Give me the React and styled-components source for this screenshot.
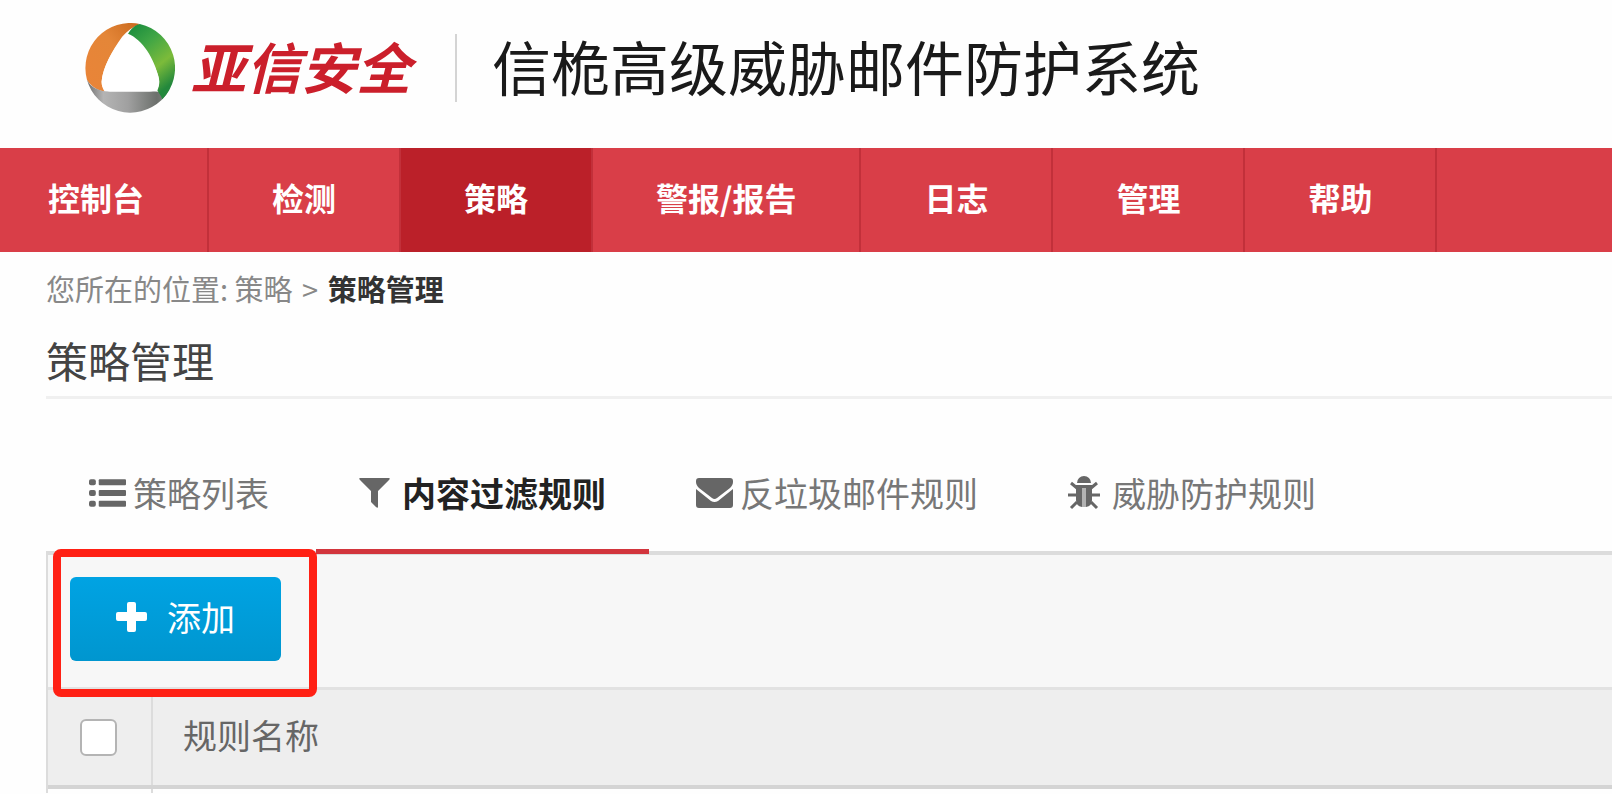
import React, { useState } from 'react';
import styled, { createGlobalStyle } from 'styled-components';

const NAV_ITEMS = ['控制台', '检测', '策略', '警报/报告', '日志', '管理', '帮助'];

const TABS = [
    { id: 'list', label: '策略列表', Icon: ListIcon, gap: 7 },
    { id: 'content', label: '内容过滤规则', Icon: FilterIcon, gap: 12 },
    { id: 'spam', label: '反垃圾邮件规则', Icon: MailIcon, gap: 7 },
    { id: 'threat', label: '威胁防护规则', Icon: BugIcon, gap: 12 },
];

function Logo() {
    return (
        <svg width="90" height="90" viewBox="0 0 92 92" aria-hidden="true">
            <defs>
                <linearGradient id="orange" x1="0" y1="1" x2="1" y2="0">
                    <stop offset="0" stopColor="#ea8438" />
                    <stop offset="0.6" stopColor="#e48638" />
                    <stop offset="1" stopColor="#c9681c" />
                </linearGradient>
                <linearGradient id="green" x1="0" y1="0" x2="0.5" y2="1">
                    <stop offset="0" stopColor="#14883c" />
                    <stop offset="0.35" stopColor="#3fa545" />
                    <stop offset="0.7" stopColor="#7cbb3a" />
                    <stop offset="1" stopColor="#23883c" />
                </linearGradient>
                <linearGradient id="grey" x1="0" y1="0" x2="1" y2="0">
                    <stop offset="0" stopColor="#6f6f6f" />
                    <stop offset="0.2" stopColor="#b4b4b4" />
                    <stop offset="0.5" stopColor="#a0a0a0" />
                    <stop offset="0.85" stopColor="#6c706c" />
                    <stop offset="1" stopColor="#7d857d" />
                </linearGradient>
            </defs>
            <path d="M2 58A46 46 0 0 1 56 1C49 4 43 8 38 14C28 28 18 45 17 60C17 64 18 67 20 70C13 69 6 65 2 58Z" fill="url(#orange)" />
            <path d="M2 58A46 46 0 0 0 78 79C81 76 84 72 86 68C80 71 74 70 68 70H24C15 70 6 66 2 58Z" fill="url(#grey)" />
            <path d="M44 11C47 6 51 2 56 1A46 46 0 0 1 79 78C78 75 76 72 74 69C76 64 76 60 75 55C71 37 59 17 44 11Z" fill="url(#green)" />
            <path d="M44 12C37 13 18 42 17 60C17 67 21 70 28 70H66C73 70 76 66 76 60C75 43 52 13 44 12Z" fill="#fff" />
        </svg>
    );
}

function ListIcon() {
    return (
        <svg width="37" height="30" viewBox="0 0 38 30" fill="currentColor" aria-hidden="true">
            <rect x="0" y="1" width="7" height="6" rx="2" />
            <rect x="10" y="1" width="28" height="6" rx="1" />
            <rect x="0" y="12" width="7" height="6" rx="2" />
            <rect x="10" y="12" width="28" height="6" rx="1" />
            <rect x="0" y="23" width="7" height="6" rx="2" />
            <rect x="10" y="23" width="28" height="6" rx="1" />
        </svg>
    );
}

function FilterIcon() {
    return (
        <svg width="31" height="30" viewBox="0 0 31 30" fill="currentColor" aria-hidden="true">
            <path d="M1 0H30C31 0 31 1 30 2L19 13V29C19 30 18 30 17 29L12 24V13L1 2C0 1 0 0 1 0Z" />
        </svg>
    );
}

function MailIcon() {
    return (
        <svg width="37" height="30" viewBox="0 0 37 30" fill="currentColor" aria-hidden="true">
            <path d="M3 0H34Q37 0 37 3V4C37 6 36 8 34 10L21 20Q18.500 22 16 20L3 10C1 8 0 6 0 4V3Q0 0 3 0Z" />
            <path d="M0 11L15 23Q18.500 25 22 23L37 11V27Q37 30 34 30H3Q0 30 0 27Z" />
        </svg>
    );
}

function BugIcon() {
    return (
        <svg width="32" height="34" viewBox="0 0 32 34" fill="currentColor" aria-hidden="true">
            <path d="M9 7A7 7 0 0 1 23 7Z" />
            <path d="M8 9H24V24Q24 30 18 31V12H14V31Q8 30 8 24Z" />
            <path d="M14 12H18V31H14Z" opacity="0.5" />
            <path
                d="M3 7L9 12M29 7L23 12M0 19H8M24 19H32M9 26L3 32M23 26L29 32"
                fill="none"
                stroke="currentColor"
                strokeWidth="3"
            />
        </svg>
    );
}

function PlusIcon() {
    return (
        <svg width="31" height="30" viewBox="0 0 31 30" fill="currentColor" aria-hidden="true">
            <path d="M13 0H18Q20 0 20 2V10H29Q31 10 31 12V17Q31 19 29 19H20V28Q20 30 18 30H13Q11 30 11 28V19H2Q0 19 0 17V12Q0 10 2 10H11V2Q11 0 13 0Z" />
        </svg>
    );
}

function App() {
    const [activeNav, setActiveNav] = useState('策略');
    const [activeTab, setActiveTab] = useState('content');
    const [allChecked, setAllChecked] = useState(false);

    return (
        <>
            <GlobalStyle />
            <Header>
                <Logo />
                <Brand>亚信安全</Brand>
                <ProductName>信桅高级威胁邮件防护系统</ProductName>
            </Header>

            <Nav>
                {NAV_ITEMS.map((item) => (
                    <NavLink
                        key={item}
                        href="#"
                        $active={item === activeNav}
                        onClick={() => setActiveNav(item)}
                    >
                        {item}
                    </NavLink>
                ))}
            </Nav>

            <Content>
                <Breadcrumb>
                    您所在的位置: <a href="#">策略</a> <Separator>&gt;</Separator> <strong>策略管理</strong>
                </Breadcrumb>
                <PageTitle>策略管理</PageTitle>

                <TabList role="tablist">
                    {TABS.map(({ id, label, Icon, gap }) => (
                        <Tab
                            key={id}
                            role="tab"
                            aria-selected={id === activeTab}
                            $active={id === activeTab}
                            $gap={gap}
                            onClick={() => setActiveTab(id)}
                        >
                            <Icon />
                            <span>{label}</span>
                        </Tab>
                    ))}
                </TabList>

                <Panel>
                    <Toolbar>
                        <Highlight>
                            <AddButton>
                                <PlusIcon />
                                添加
                            </AddButton>
                        </Highlight>
                    </Toolbar>
                    <RuleTable>
                        <thead>
                            <tr>
                                <CheckCell>
                                    <Checkbox
                                        type="checkbox"
                                        aria-label="规则名称"
                                        checked={allChecked}
                                        onChange={(e) => setAllChecked(e.target.checked)}
                                    />
                                </CheckCell>
                                <HeadCell>规则名称</HeadCell>
                            </tr>
                        </thead>
                        <tbody>
                            <tr>
                                <EmptyCell $divided />
                                <EmptyCell />
                            </tr>
                        </tbody>
                    </RuleTable>
                </Panel>
            </Content>
        </>
    );
}

export default App;

const GlobalStyle = createGlobalStyle`
    * {
        box-sizing: border-box;
    }

    body {
        margin: 0;
        background-color: #fefefe;
        color: #666;
        font-family: "Noto Sans CJK SC", sans-serif;
    }

    button {
        font-family: inherit;
        cursor: pointer;
    }
`;

const Header = styled.header`
    display: flex;
    align-items: center;
    padding: 23px 85px 35px;
    white-space: nowrap;
`;

const Brand = styled.span`
    margin-left: 16px;
    padding-right: 44px;
    padding-bottom: 6px;
    border-right: 2px solid #d4d4d4;
    color: #cb1f2b;
    font-size: 55px;
    font-style: italic;
    font-weight: 700;
    line-height: 62px;
`;

const ProductName = styled.span`
    margin-left: 35px;
    padding-bottom: 4px;
    color: #1a1a1a;
    font-size: 59px;
    line-height: 70px;
`;

const Nav = styled.nav`
    display: flex;
    background-color: #d93e48;
`;

const NavLink = styled.a`
    padding: 0 63px 6px;
    border-right: 2px solid #c2303a;
    background-color: ${(props) => (props.$active ? '#bb2029' : 'transparent')};
    color: #fff;
    font-size: 32px;
    font-weight: 700;
    line-height: 98px;
    text-decoration: none;
    white-space: nowrap;

    &:first-child {
        padding-left: 48px;
    }
`;

const Content = styled.main`
    padding: 16px 0 0 46px;
`;

const Breadcrumb = styled.div`
    color: #888;
    font-size: 29px;
    line-height: 40px;

    a {
        color: inherit;
        text-decoration: none;
    }

    strong {
        color: #333;
    }
`;

const Separator = styled.span`
    margin: 0 3px;
`;

const PageTitle = styled.h1`
    margin: 22px 0 0;
    padding-bottom: 6px;
    border-bottom: 3px solid #f0f0f0;
    color: #444;
    font-size: 42px;
    font-weight: 400;
    line-height: 60px;
`;

const TabList = styled.div`
    display: flex;
    gap: 4px;
    margin-top: 36px;
`;

const Tab = styled.button`
    display: flex;
    align-items: center;
    gap: ${(props) => props.$gap}px;
    margin-bottom: -3px;
    padding: 28px 43px 26px;
    border: none;
    border-bottom: 5px solid ${(props) => (props.$active ? '#d2353d' : 'transparent')};
    background: none;
    color: #666;
    font-size: 34px;
    line-height: 60px;
    white-space: nowrap;
    z-index: 1;

    span {
        color: ${(props) => (props.$active ? '#222' : '#777')};
        font-weight: ${(props) => (props.$active ? 700 : 400)};
    }
`;

const Panel = styled.section`
    border-top: 4px solid #dcdcdc;
    border-left: 2px solid #dcdcdc;
    background-color: #f7f7f7;
`;

const Toolbar = styled.div`
    display: flex;
    padding: 22px;
    padding-bottom: 26px;
`;

const Highlight = styled.div`
    position: relative;

    &::after {
        content: '';
        position: absolute;
        top: -28px;
        right: -36px;
        bottom: -36px;
        left: -17px;
        border: 8px solid #ff2014;
        border-radius: 8px;
        pointer-events: none;
        z-index: 2;
    }
`;

const AddButton = styled.button`
    display: flex;
    align-items: center;
    gap: 20px;
    padding: 10px 46px 14px;
    border: none;
    border-radius: 6px;
    background: linear-gradient(#00a3e3, #0096cf);
    color: #fff;
    font-size: 34px;
    line-height: 60px;
`;

const RuleTable = styled.table`
    width: 100%;
    border-collapse: collapse;
    background-color: #fefefe;

    thead {
        border-top: 3px solid #e2e2e2;
        border-bottom: 4px solid #d4d4d4;
        background-color: #eee;
    }
`;

const CheckCell = styled.th`
    width: 104px;
    padding: 0 2px 0 0;
    border-right: 2px solid #dcdcdc;
    line-height: 0;
`;

const Checkbox = styled.input`
    width: 37px;
    height: 37px;
    margin: 0;
    border: 2px solid #b4b4b4;
    border-radius: 6px;
    background-color: ${(props) => (props.checked ? '#0096cf' : '#fff')};
    appearance: none;
`;

const HeadCell = styled.th`
    padding: 15px 30px 20px;
    color: #666;
    font-size: 34px;
    font-weight: 400;
    line-height: 60px;
    text-align: left;
`;

const EmptyCell = styled.td`
    height: 6px;
    padding: 0;
    border-right: ${(props) => (props.$divided ? '2px solid #dcdcdc' : 'none')};
`;
